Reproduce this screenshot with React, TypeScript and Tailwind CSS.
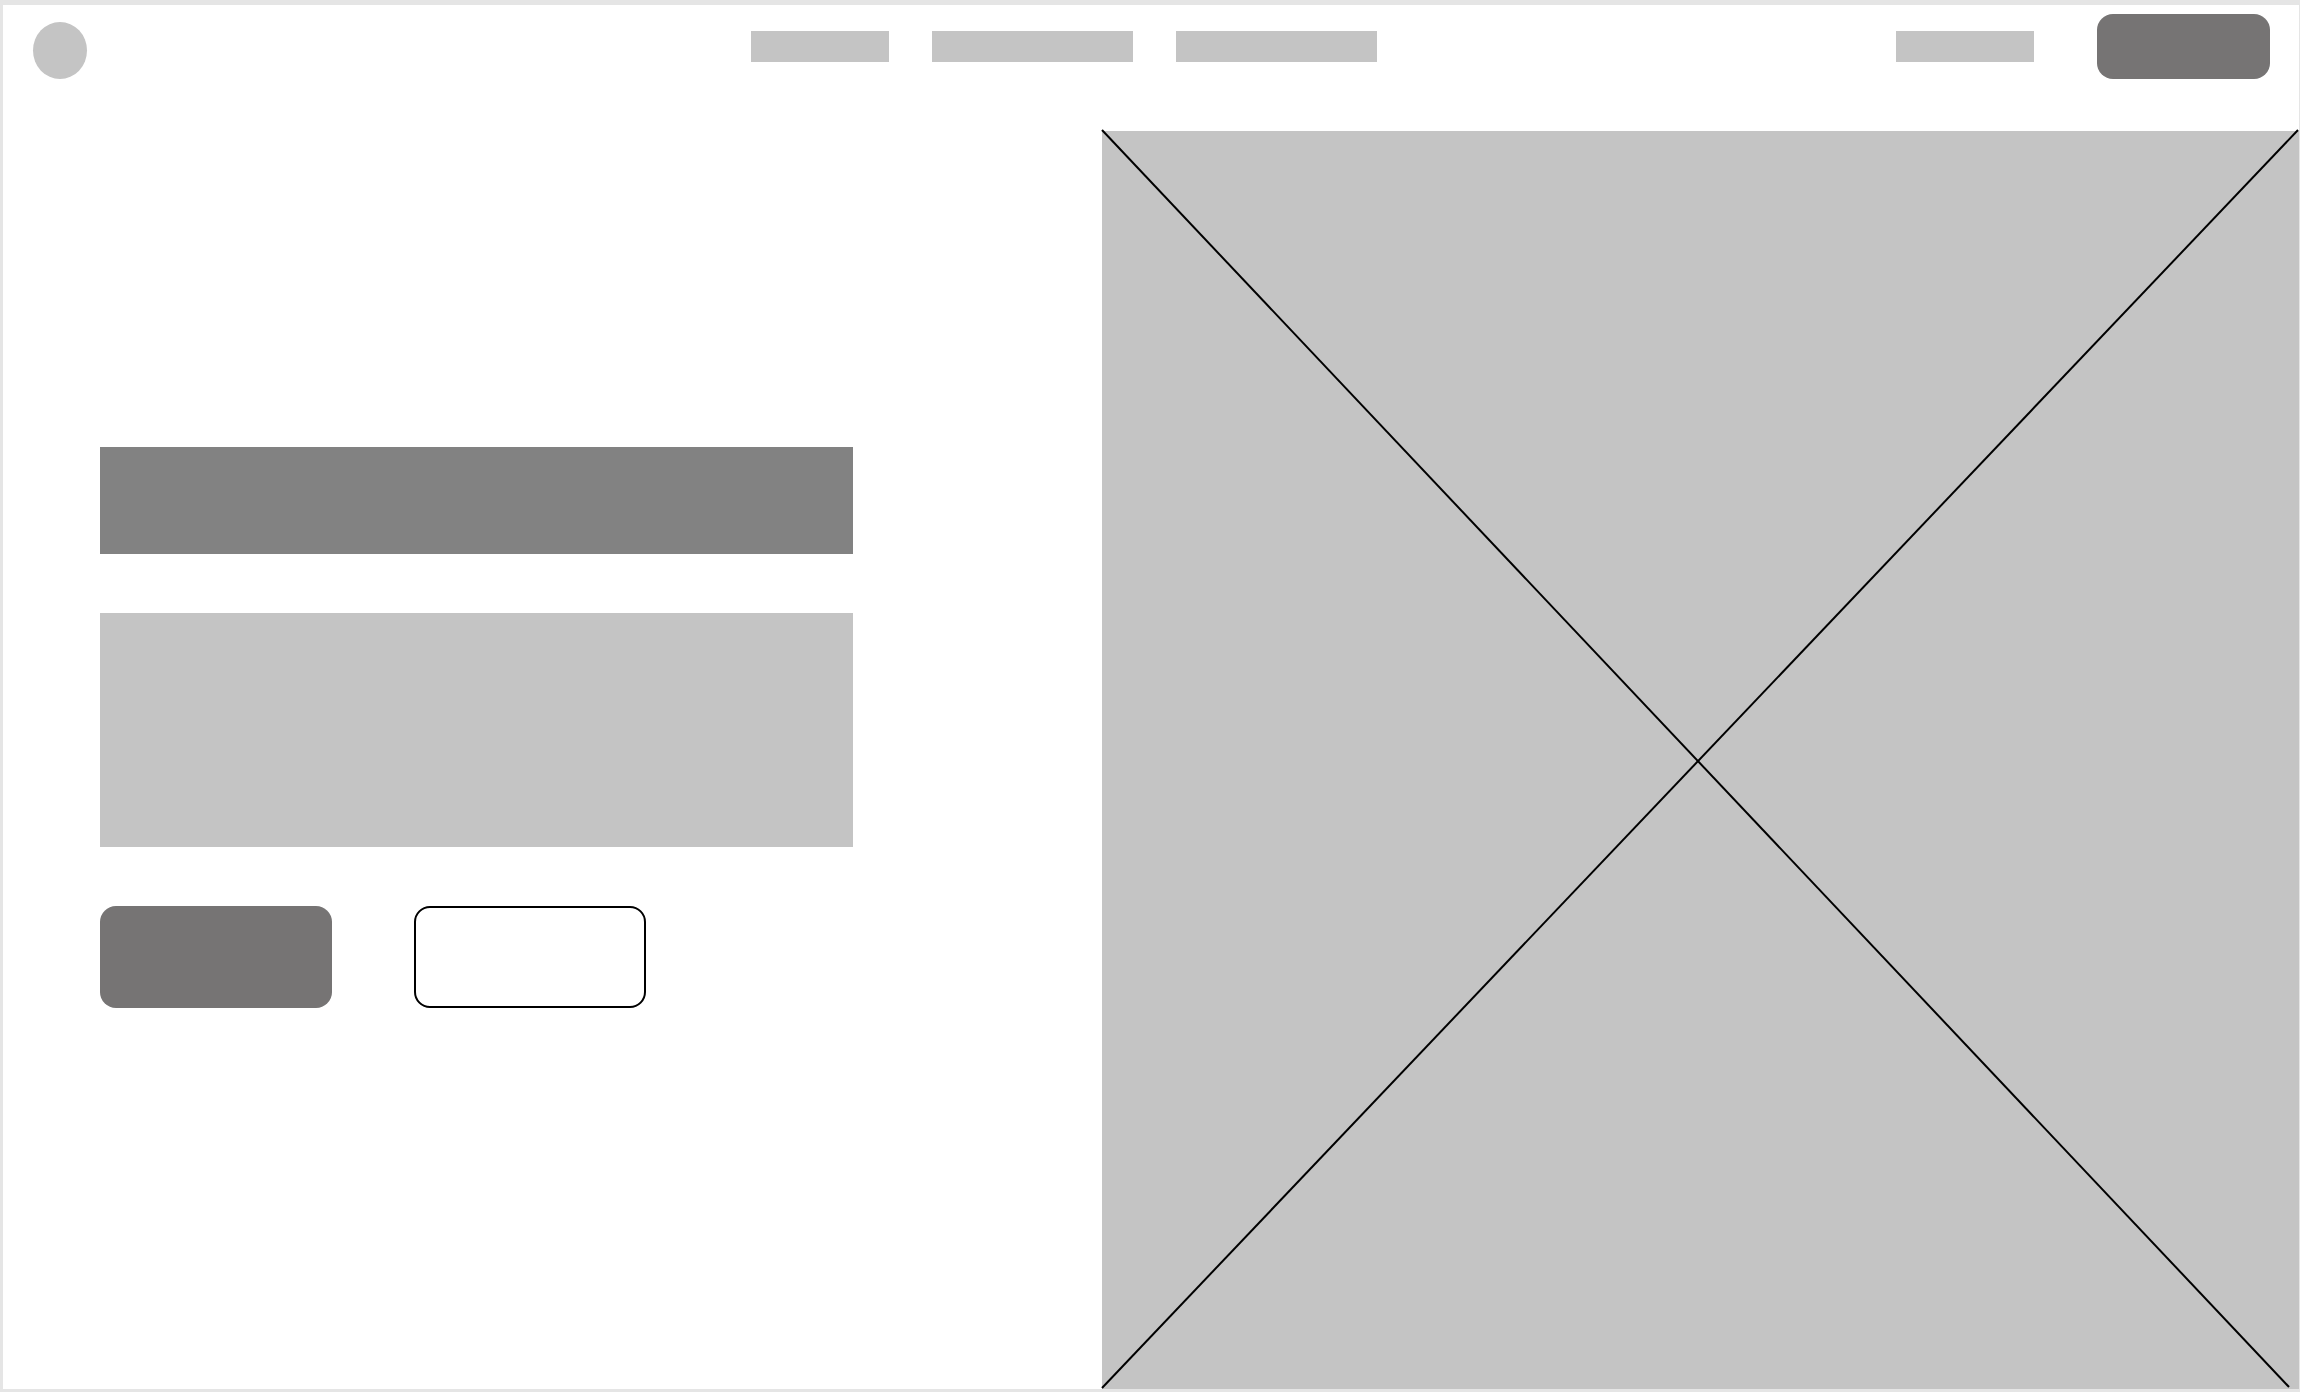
import clsx from "clsx";

const NAV_ITEMS = [
  { label: "Home", href: "#home", width: "w-[138px]" },
  { label: "Features", href: "#features", width: "w-[201px]" },
  { label: "Resources", href: "#resources", width: "w-[201px]" },
];

function BarLink({ label, href, width }: { label: string; href: string; width: string }) {
  return <a href={href} aria-label={label} className={clsx("block h-[31px] bg-[#c4c4c4]", width)} />;
}

function Header() {
  return (
    <header className="flex h-[126px] items-start pl-[30px] pr-[29px] pt-[9px]">
      <div className="flex h-[65px] w-full items-center">
        <a
          href="#home"
          aria-label="Logo"
          className="h-[57px] w-[54px] shrink-0 self-end rounded-[50%] bg-[#c4c4c4]"
        />
        <div className="grow-[23]" />
        <nav className="flex gap-[43px]">
          {NAV_ITEMS.map((item) => (
            <BarLink key={item.href} {...item} />
          ))}
        </nav>
        <div className="grow-[18]" />
        <div className="flex items-center gap-[63px]">
          <BarLink label="Log in" href="#login" width="w-[138px]" />
          <button
            type="button"
            aria-label="Sign up"
            className="h-[65px] w-[173px] rounded-2xl bg-[#767474]"
          />
        </div>
      </div>
    </header>
  );
}

function HeroCopy() {
  return (
    <section className="flex flex-col justify-center pb-[65px] pl-[97px]">
      <div className="w-full max-w-[753px]">
        <div className="h-[107px] bg-[#828282]" />
        <div className="mt-[59px] h-[234px] bg-[#c4c4c4]" />
        <div className="mt-[59px] flex gap-[82px]">
          <button
            type="button"
            aria-label="Get started"
            className="h-[102px] w-[232px] rounded-2xl bg-[#767474]"
          />
          <button
            type="button"
            aria-label="Learn more"
            className="h-[102px] w-[232px] rounded-2xl border-2 border-black bg-white"
          />
        </div>
      </div>
    </section>
  );
}

// crossed box standing in for the hero image
function ImagePlaceholder() {
  return (
    <div className="relative bg-[#c4c4c4]">
      <svg
        aria-hidden
        viewBox="0 0 1197 1258"
        preserveAspectRatio="none"
        className="absolute inset-0 h-full w-full overflow-visible"
        stroke="#000"
        strokeWidth={2}
      >
        <line x1="0" y1="-1" x2="1187" y2="1256" vectorEffect="non-scaling-stroke" />
        <line x1="0" y1="1257" x2="1196" y2="-1" vectorEffect="non-scaling-stroke" />
      </svg>
    </div>
  );
}

export default function App() {
  return (
    <div className="flex min-h-screen flex-col border-b-[3px] border-l-[3px] border-r border-t-[5px] border-[#e5e5e5] bg-white">
      <Header />
      <main className="grid flex-1 grid-cols-[1099fr_1197fr]">
        <HeroCopy />
        <ImagePlaceholder />
      </main>
    </div>
  );
}
